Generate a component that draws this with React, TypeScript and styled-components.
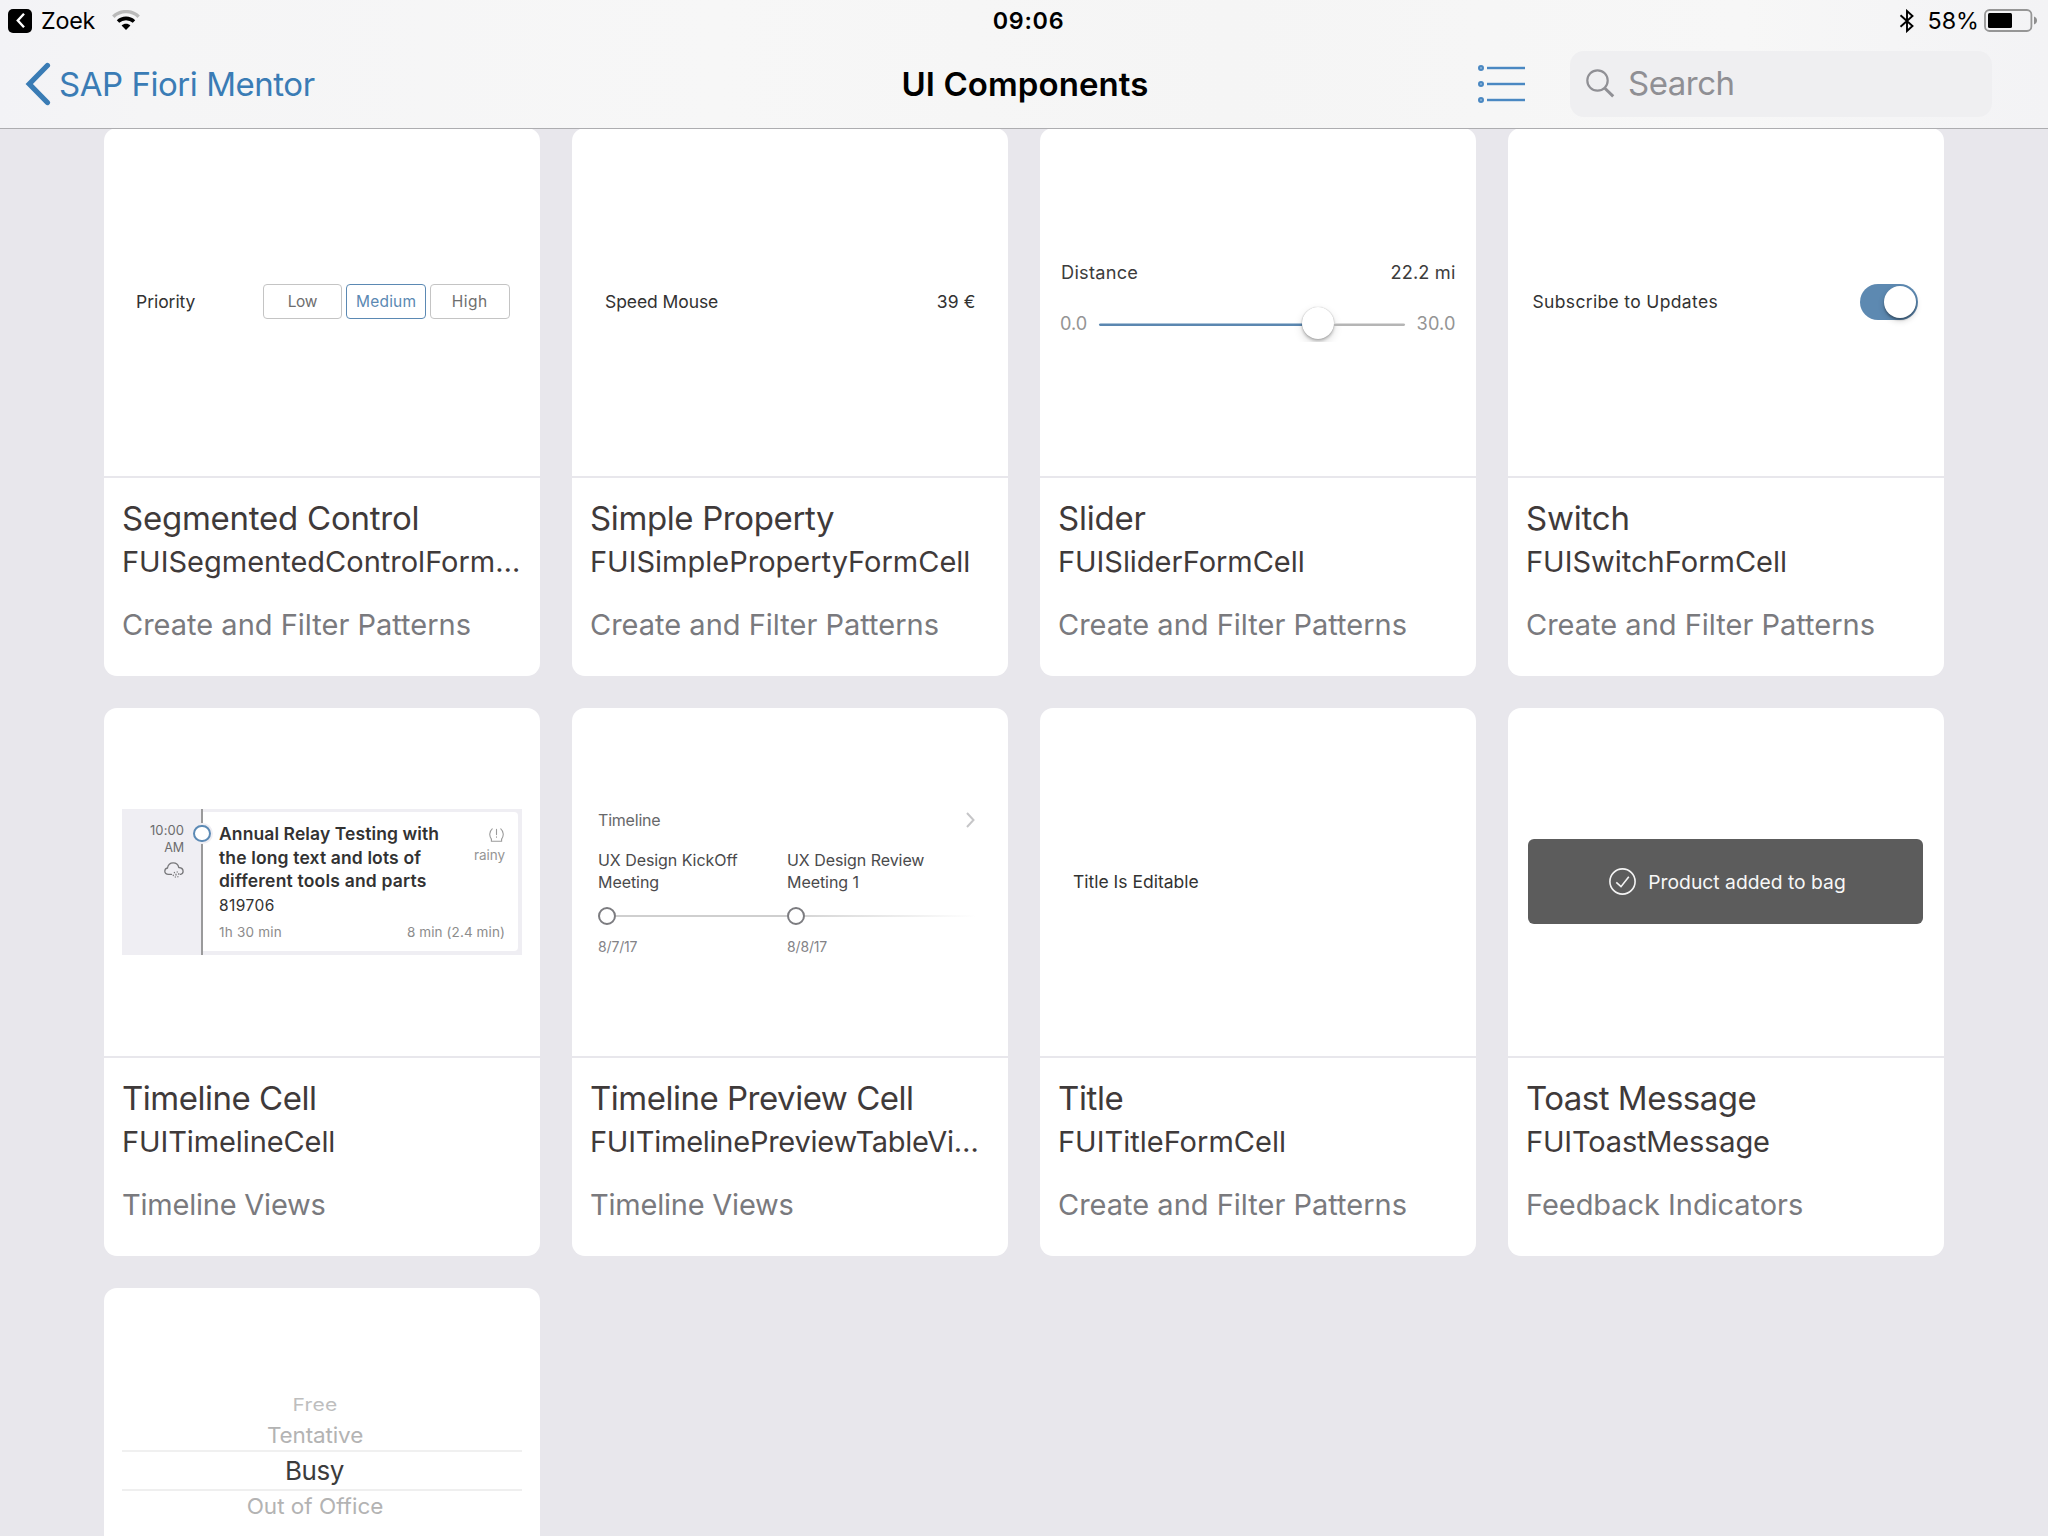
import React from "react";
import styled, { createGlobalStyle } from "styled-components";

const GlobalStyle = createGlobalStyle`
  *, *::before, *::after { box-sizing: border-box; }
  body { margin: 0; background: #e8e7ec; }
`;

const Screen = styled.div`
  display: flex;
  flex-direction: column;
  width: 2048px;
  height: 1536px;
  overflow: hidden;
  background: #e8e7ec;
  font-family: Inter, "Liberation Sans", sans-serif;
`;

interface LabelProps {
  $size: number;
  $line?: number;
  $color?: string;
  $track?: number;
  $weight?: number;
}

const Label = styled.span<LabelProps>`
  display: block;
  flex: none;
  white-space: pre;
  font-size: ${(p) => p.$size}px;
  line-height: ${(p) => p.$line ?? 24}px;
  color: ${(p) => p.$color ?? "#323232"};
  letter-spacing: ${(p) => p.$track ?? 0}px;
  font-weight: ${(p) => p.$weight ?? 400};
`;

/* ---------- Header ---------- */

const Header = styled.header`
  position: relative;
  flex: none;
  height: 128px;
  background: linear-gradient(90deg, #f3f3f6 0, #f5f5f6 7%, #f7f7f7 35%, #f5f5f5 60%, #f7f7f7 85%, #f3f3f5 100%);
  box-shadow: 0 1px 0 #adadb0;
`;

const StatusBar = styled.div`
  display: grid;
  grid-template-columns: 1fr auto 1fr;
  align-items: center;
  height: 41px;
  padding: 0 11px 0 8px;
`;

const StatusLeft = styled.div`
  display: flex;
  align-items: center;
`;

const StatusRight = styled(StatusLeft)`
  justify-content: flex-end;
`;

const BackBadge = styled.span`
  display: grid;
  place-items: center;
  width: 24px;
  height: 24px;
  margin-right: 9px;
  border-radius: 5px;
  background: #000;
`;

const WifiIcon = styled.svg`
  margin: 0 0 1px 17px;
`;

const Clock = styled.div`
  padding-left: 12px;
`;

const BatteryIcon = styled.svg`
  margin-left: 5px;
`;

const BluetoothIcon = styled.svg`
  margin-right: 13px;
`;

const NavBar = styled.nav`
  display: grid;
  grid-template-columns: 1fr auto 1fr;
  align-items: center;
  height: 87px;
  padding: 0 56px 2px 25px;
`;

const BackLink = styled.div`
  display: flex;
  align-items: center;
  gap: 8px;
`;

const NavTitle = styled.div`
  margin-left: 33px;
`;

const NavTools = styled.div`
  display: flex;
  align-items: center;
  justify-content: flex-end;
  gap: 43px;
  padding-top: 1px;
`;

const SearchField = styled.div`
  display: flex;
  align-items: center;
  gap: 13px;
  width: 422px;
  height: 66px;
  padding: 0 0 2px 15px;
  border-radius: 14px;
  background: #efeff1;
`;

/* ---------- Cards ---------- */

const Grid = styled.main`
  display: grid;
  flex: none;
  grid-template-columns: repeat(4, 436px);
  grid-auto-rows: 548px;
  gap: 32px;
  padding-left: 104px;
`;

const CardBox = styled.article`
  display: flex;
  flex-direction: column;
  border-radius: 13px;
  background: #fff;
  overflow: hidden;
`;

const PreviewArea = styled.div`
  display: flex;
  flex-direction: column;
  height: 348px;
`;

const Info = styled.div`
  flex: 1;
  padding: 20px 18px 0;
  border-top: 2px solid #e8e7ec;
`;

const ClassName = styled(Label)`
  margin: 5.5px 0 27px;
`;

const FormRow = styled.div<{ $left: number; $right: number; $lift?: number }>`
  display: flex;
  flex: 1;
  align-items: center;
  justify-content: space-between;
  padding: 0 ${(p) => p.$right}px ${(p) => p.$lift ?? 0}px ${(p) => p.$left}px;
`;

const Segments = styled.div`
  display: flex;
  gap: 4.3px;
  margin-bottom: 1px;
`;

const Segment = styled.div<{ $active?: boolean }>`
  display: flex;
  align-items: center;
  justify-content: center;
  width: 79.4px;
  height: 35px;
  padding-top: 1px;
  border: 1px solid ${(p) => (p.$active ? "#5b89b3" : "#c4c4c4")};
  border-radius: 4px;
`;

const SliderBox = styled.div`
  padding: 132px 20.5px 0 20px;
`;

const SliderHead = styled.div`
  display: flex;
  justify-content: space-between;
  margin-bottom: 23px;
  padding-left: 1px;
`;

const SliderBody = styled.div`
  display: flex;
  align-items: center;
  height: 32px;
`;

const Track = styled.div`
  display: flex;
  flex: 1;
  align-items: center;
  margin: 0 12px;
  clip-path: inset(-12px -12px -3px);
`;

const TrackFill = styled.span`
  width: 202.7px;
  height: 3px;
  margin-top: 2px;
  border-radius: 2px 0 0 2px;
  background: linear-gradient(#a9c2d8 0 1px, #5b87b0 1px);
`;

const TrackRest = styled.span`
  flex: 1;
  height: 3px;
  margin-top: 2px;
  border-radius: 0 2px 2px 0;
  background: linear-gradient(#dadada 0 1px, #b5b5b5 1px);
`;

const Thumb = styled.span`
  flex: none;
  width: 32px;
  height: 32px;
  border-radius: 50%;
  background: #fff;
  box-shadow: 0 0 1px rgba(0, 0, 0, 0.3), 0 2px 3px rgba(0, 0, 0, 0.22), 0 4px 10px rgba(0, 0, 0, 0.14);
`;

const Toggle = styled.div`
  display: flex;
  align-items: center;
  justify-content: flex-end;
  width: 58px;
  height: 36px;
  padding-right: 1.6px;
  border-radius: 18px;
  background: #5d89b1;
`;

const Knob = styled.span`
  width: 32px;
  height: 32px;
  border-radius: 50%;
  background: #fff;
  box-shadow: 0 2px 2px rgba(0, 0, 0, 0.3), 0 3px 6px rgba(0, 0, 0, 0.16);
`;

/* ---------- Timeline cell ---------- */

const TimelineBox = styled.div`
  display: flex;
  width: 400px;
  height: 146px;
  margin: 101px 0 0 18px;
  background: #efeef3;
`;

const TimeColumn = styled.div`
  display: flex;
  flex-direction: column;
  align-items: flex-end;
  width: 79px;
  padding: 13px 17px 0 0;
`;

const CloudIcon = styled.svg`
  margin-top: 5px;
`;

const Rail = styled.div`
  position: relative;
  width: 2px;
  background: #9a9a9b;
`;

const RailNode = styled.span`
  position: absolute;
  top: 15.6px;
  left: -7.8px;
  width: 17.6px;
  height: 17.6px;
  border: 2.4px solid #5c8ab5;
  border-radius: 50%;
  background: #fff;
  box-shadow: 0 0 0 2px #efeef3;
`;

const EventCard = styled.div`
  display: flex;
  flex: 1;
  flex-direction: column;
  margin: 3px 4px 4px 0;
  padding: 10px 13px 0 16px;
  border-radius: 0 4px 4px 0;
  background: #fff;
`;

const EventMain = styled.div`
  display: flex;
  justify-content: space-between;
`;

const EventStatus = styled.div`
  display: flex;
  flex-direction: column;
  align-items: flex-end;
  gap: 4px;
  padding-top: 6px;
`;

const EventNumber = styled(Label)`
  margin: 1.5px 0 6.5px;
`;

const EventFoot = styled.div`
  display: flex;
  justify-content: space-between;
`;

/* ---------- Timeline preview ---------- */

const PreviewTimeline = styled.div`
  padding: 102px 33px 0 26px;
`;

const PreviewHead = styled.div`
  display: flex;
  align-items: center;
  justify-content: space-between;
  margin-bottom: 18.5px;
`;

const Milestones = styled.div`
  display: grid;
  grid-template-columns: repeat(2, 189px);
`;

const MilestoneRail = styled.div`
  display: flex;
  align-items: center;
  height: 18px;
  margin: 14px 0 13px;
`;

const MilestoneDot = styled.span`
  width: 18px;
  height: 18px;
  border: 2.4px solid #7c7c80;
  border-radius: 50%;
`;

const MilestoneLine = styled.span<{ $fade?: boolean }>`
  flex: 1;
  height: 2px;
  background: ${(p) => (p.$fade ? "linear-gradient(90deg, #d6d6d6, #fff)" : "#cfcfcf")};
`;

/* ---------- Toast & picker ---------- */

const Toast = styled.div`
  display: flex;
  align-items: center;
  justify-content: center;
  gap: 12px;
  width: 395px;
  height: 85px;
  margin: 131px 0 0 20px;
  padding-left: 4px;
  border-radius: 6px;
  background: #5c5c5c;
`;

const Picker = styled.div`
  display: flex;
  flex-direction: column;
  align-items: stretch;
  width: 400px;
  margin: 103px 0 0 18px;
  text-align: center;
`;

const PickerOption = styled(Label)<{ $squash: number }>`
  margin: 0 0 1.5px;
  padding-right: 14px;
  transform: scaleY(${(p) => p.$squash});
`;

const PickerBand = styled.div`
  display: flex;
  align-items: center;
  justify-content: center;
  height: 41px;
  margin-bottom: 1px;
  padding: 1px 15px 0 0;
  border-top: 2px solid #f0f0f0;
  border-bottom: 2px solid #efefef;
`;

/* ---------- Previews ---------- */

const SegmentedPreview = () => (
  <FormRow $left={32} $right={30.5}>
    <Label $size={17.5} $track={-0.05}>Priority</Label>
    <Segments>
      <Segment><Label $size={15.5} $color="#6e6e6e" $track={-0.3}>Low</Label></Segment>
      <Segment $active><Label $size={15.5} $color="#5b89b3" $track={0.17}>Medium</Label></Segment>
      <Segment><Label $size={15.5} $color="#6e6e6e" $track={0.5}>High</Label></Segment>
    </Segments>
  </FormRow>
);

const SimplePropertyPreview = () => (
  <FormRow $left={33} $right={32.5}>
    <Label $size={17.5} $track={-0.08}>Speed Mouse</Label>
    <Label $size={17.5} $track={0.1}>39 €</Label>
  </FormRow>
);

const SliderPreview = () => (
  <SliderBox>
    <SliderHead>
      <Label $size={18.2} $color="#3c3c3c" $track={0.25}>Distance</Label>
      <Label $size={18.2} $color="#3c3c3c" $track={0.15}>22.2 mi</Label>
    </SliderHead>
    <SliderBody>
      <Label $size={18.2} $color="#949494">0.0</Label>
      <Track>
        <TrackFill />
        <Thumb />
        <TrackRest />
      </Track>
      <Label $size={18.2} $color="#949494" $track={0.1}>30.0</Label>
    </SliderBody>
  </SliderBox>
);

const SwitchPreview = () => (
  <FormRow $left={24.5} $right={26}>
    <Label $size={17.5} $track={0.34}>Subscribe to Updates</Label>
    <Toggle><Knob /></Toggle>
  </FormRow>
);

const TimelineCellPreview = () => (
  <TimelineBox>
    <TimeColumn>
      <Label $size={13} $line={17.4} $color="#6c6c6e" $track={0.07}>10:00</Label>
      <Label $size={12.6} $line={17.4} $color="#6c6c6e" $track={-0.2}>AM</Label>
      <CloudIcon width="20" height="16" viewBox="0 0 20 16" fill="none" stroke="#77777a" strokeWidth="1.3" strokeLinecap="round">
        <path d="M7.5 12.4H4.3C2.3 12.4.8 11 .8 9.2c0-1.700 1.100-2.900 2.700-3.200C4 3 6.200.9 9.200.9c2.900 0 4.900 1.700 5.600 4.600 2.600.2 4.300 1.700 4.300 3.800 0 1.500-1.100 2.800-2.600 3.100" />
        <path d="M10.400 10.400v.3M13.200 9.800v.3M9.300 13.200v.3M12 12.200v.8M14.800 11.700v.6M11.300 15v.1M13.900 14.700v.1" />
      </CloudIcon>
    </TimeColumn>
    <Rail><RailNode /></Rail>
    <EventCard>
      <EventMain>
        <div>
          <Label $size={17.5} $line={23.7} $weight={600} $track={0.1}>Annual Relay Testing with</Label>
          <Label $size={17.5} $line={23.7} $weight={600} $track={0.14}>the long text and lots of</Label>
          <Label $size={17.5} $line={23.7} $weight={600} $track={0.2}>different tools and parts</Label>
        </div>
        <EventStatus>
          <svg width="16" height="14" viewBox="0 0 16 14" fill="none" stroke="#9b9b9b" strokeWidth="1.1" strokeLinecap="round">
            <path d="M3.200.8C1.300 2.500.6 4.600.8 6.800c.1 1.800.7 3.300 1.600 4.400M11.800.8c1.900 1.700 2.600 3.800 2.400 6-.1 1.800-.7 3.300-1.600 4.400" />
            <path d="M2.400 11.200v2h10.200v-2M7.500 1.400v5.200M7.500 8.900v.4" />
          </svg>
          <Label $size={13.5} $line={18} $color="#959595" $track={-0.05}>rainy</Label>
        </EventStatus>
      </EventMain>
      <EventNumber $size={15.5} $line={22} $track={0.44}>819706</EventNumber>
      <EventFoot>
        <Label $size={13.5} $line={18} $color="#8c8c8c" $track={0.21}>1h 30 min</Label>
        <Label $size={13.5} $line={18} $color="#8c8c8c" $track={0.1}>8 min (2.4 min)</Label>
      </EventFoot>
    </EventCard>
  </TimelineBox>
);

const milestones = [
  { lines: ["UX Design KickOff", "Meeting"], date: "8/7/17", fade: false },
  { lines: ["UX Design Review", "Meeting 1"], date: "8/8/17", fade: true },
];

const TimelinePreview = () => (
  <PreviewTimeline>
    <PreviewHead>
      <Label $size={16} $line={20} $color="#68686a" $track={-0.2}>Timeline</Label>
      <svg width="9" height="16" viewBox="0 0 9 16" fill="none" stroke="#c6c6c8" strokeWidth="2">
        <path d="M1 1l6.500 7L1 15" />
      </svg>
    </PreviewHead>
    <Milestones>
      {milestones.map((m) => (
        <div key={m.date}>
          {m.lines.map((line) => (
            <Label key={line} $size={16} $line={22} $color="#4a4a4c" $track={-0.06}>{line}</Label>
          ))}
          <MilestoneRail>
            <MilestoneDot />
            <MilestoneLine $fade={m.fade} />
          </MilestoneRail>
          <Label $size={14} $line={18} $color="#838387" $track={-0.15}>{m.date}</Label>
        </div>
      ))}
    </Milestones>
  </PreviewTimeline>
);

const TitlePreview = () => (
  <FormRow $left={33} $right={32} $lift={1}>
    <Label $size={17.5}>Title Is Editable</Label>
  </FormRow>
);

const ToastPreview = () => (
  <Toast>
    <svg width="27" height="27" viewBox="0 0 27 27" fill="none" stroke="#f4f4f4" strokeWidth="1.6">
      <circle cx="13.500" cy="13.500" r="12.600" />
      <path d="M7.300 14.400l4.700 4.300 7.800-10" />
    </svg>
    <Label $size={19.3} $color="#f7f7f7">Product added to bag</Label>
  </Toast>
);

const PickerPreview = () => (
  <Picker>
    <PickerOption $size={21} $line={28} $color="#bebebe" $track={0.24} $squash={0.83}>Free</PickerOption>
    <PickerOption $size={22.5} $line={28} $color="#b3b3b3" $track={-0.13} $squash={0.96}>Tentative</PickerOption>
    <PickerBand>
      <Label $size={26} $line={32} $color="#3c3c3c" $track={-0.47}>Busy</Label>
    </PickerBand>
    <PickerOption $size={22.5} $line={28} $color="#b3b3b3" $squash={0.97}>Out of Office</PickerOption>
  </Picker>
);

interface Component {
  title: string;
  titleTrack: number;
  className: string;
  classTrack?: number;
  category: string;
  categoryTrack?: number;
  Preview: React.ComponentType;
}

const components: Component[] = [
  { title: "Segmented Control", titleTrack: -0.24, className: "FUISegmentedControlForm…", category: "Create and Filter Patterns", Preview: SegmentedPreview },
  { title: "Simple Property", titleTrack: -0.38, className: "FUISimplePropertyFormCell", category: "Create and Filter Patterns", Preview: SimplePropertyPreview },
  { title: "Slider", titleTrack: -0.2, className: "FUISliderFormCell", classTrack: -0.05, category: "Create and Filter Patterns", Preview: SliderPreview },
  { title: "Switch", titleTrack: -0.2, className: "FUISwitchFormCell", category: "Create and Filter Patterns", Preview: SwitchPreview },
  { title: "Timeline Cell", titleTrack: -0.48, className: "FUITimelineCell", classTrack: -0.1, category: "Timeline Views", categoryTrack: -0.22, Preview: TimelineCellPreview },
  { title: "Timeline Preview Cell", titleTrack: -0.49, className: "FUITimelinePreviewTableVi…", classTrack: -0.25, category: "Timeline Views", categoryTrack: -0.22, Preview: TimelinePreview },
  { title: "Title", titleTrack: -0.4, className: "FUITitleFormCell", category: "Create and Filter Patterns", Preview: TitlePreview },
  { title: "Toast Message", titleTrack: -0.5, className: "FUIToastMessage", classTrack: -0.17, category: "Feedback Indicators", categoryTrack: -0.05, Preview: ToastPreview },
];

export default function App() {
  return (
    <Screen>
      <GlobalStyle />
      <Header>
        <StatusBar>
          <StatusLeft>
            <BackBadge>
              <svg width="9" height="15" viewBox="0 0 9 15" fill="none" stroke="#fff" strokeWidth="2.400">
                <path d="M8 .8L1.800 7.500 8 14.200" />
              </svg>
            </BackBadge>
            <Label $size={23.3} $color="#000" $track={-0.2}>Zoek</Label>
            <WifiIcon width="28" height="20" viewBox="0 0 28 20" fill="none">
              <path d="M1.300 6.700C4.700 3.400 9.100 1.600 14 1.600s9.300 1.800 12.700 5.100" stroke="#bababa" strokeWidth="3.400" />
              <path d="M6 11.500c2.200-2 5-3.100 8-3.100s5.800 1.100 8 3.100" stroke="#000" strokeWidth="3.600" />
              <path d="M14 20l-4.400-4.600c1.200-1.100 2.700-1.700 4.400-1.700s3.200.6 4.400 1.700z" fill="#000" />
            </WifiIcon>
          </StatusLeft>
          <Clock>
            <Label $size={23.3} $color="#000" $weight={600} $track={0.7}>09:06</Label>
          </Clock>
          <StatusRight>
            <BluetoothIcon width="16" height="24" viewBox="0 0 16 24" fill="none" stroke="#000" strokeWidth="1.900">
              <path d="M1.500 6.200L13.500 17 8 22V2l5.500 5L1.500 17.800" />
            </BluetoothIcon>
            <Label $size={23.3} $color="#000">58%</Label>
            <BatteryIcon width="53" height="23" viewBox="0 0 53 23" fill="none">
              <rect x="1" y="1" width="46.400" height="21" rx="4.500" stroke="#969696" strokeWidth="1.800" />
              <rect x="4" y="4" width="24" height="15" rx="1.500" fill="#000" />
              <path d="M50 7.500c2 .7 3 2.200 3 4s-1 3.300-3 4z" fill="#8e8e8e" />
            </BatteryIcon>
          </StatusRight>
        </StatusBar>
        <NavBar>
          <BackLink>
            <svg width="26" height="44" viewBox="0 0 26 44" fill="none" stroke="#3a7cb5" strokeWidth="5.300" strokeLinecap="round" strokeLinejoin="miter">
              <path d="M22.400 3.500L4.300 22l18.100 18.500" />
            </svg>
            <Label $size={33} $line={40} $color="#3a7cb5" $track={-0.46}>SAP Fiori Mentor</Label>
          </BackLink>
          <NavTitle>
            <Label $size={33} $line={40} $color="#000" $weight={600} $track={0.08}>UI Components</Label>
          </NavTitle>
          <NavTools>
            <svg width="50" height="40" viewBox="0 0 50 40" fill="none">
              {[4, 20, 36].map((y) => (
                <g key={y} stroke="#4a88c2">
                  <circle cx="4" cy={y} r="2" strokeWidth="2" fill="#8fb5d8" />
                  <path d={`M10 ${y}h38`} strokeWidth="4" opacity="0.220" />
                  <path d={`M10 ${y}h38`} strokeWidth="2" />
                </g>
              ))}
            </svg>
            <SearchField>
              <svg width="30" height="30" viewBox="0 0 30 30" fill="none" stroke="#909095">
                <circle cx="12.500" cy="12.500" r="10.200" strokeWidth="2.200" />
                <path d="M19.600 20l8.600 8.400" strokeWidth="3" />
              </svg>
              <Label $size={33} $line={40} $color="#8f8f94" $track={-0.5}>Search</Label>
            </SearchField>
          </NavTools>
        </NavBar>
      </Header>
      <Grid>
        {components.map(({ title, titleTrack, className, classTrack, category, categoryTrack, Preview }) => (
          <CardBox key={title}>
            <PreviewArea><Preview /></PreviewArea>
            <Info>
              <Label $size={33} $line={40} $color="#3f3a3a" $track={titleTrack}>{title}</Label>
              <ClassName $size={29} $line={36} $color="#3f3a3a" $track={classTrack}>{className}</ClassName>
              <Label $size={29} $line={36} $color="#7a7a7e" $track={categoryTrack}>{category}</Label>
            </Info>
          </CardBox>
        ))}
        <CardBox>
          <PreviewArea><PickerPreview /></PreviewArea>
        </CardBox>
      </Grid>
    </Screen>
  );
}
